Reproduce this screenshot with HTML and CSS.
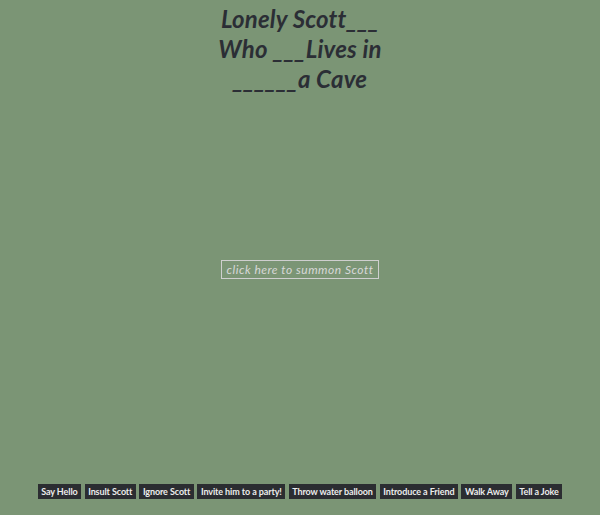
FILE: index.html
```html
<!DOCTYPE html>
<html>
<head>
<meta charset="utf-8">
<link rel="stylesheet" href="styles.css">
</head>
<body>
<div class="page">
  <h1 class="title">Lonely Scott___ Who ___Lives in ______a Cave</h1>
  <div class="stage">
    <button class="summon">click here to summon Scott</button>
  </div>
  <div class="actions">
    <button class="act">Say Hello</button>
    <button class="act">Insult Scott</button>
    <button class="act">Ignore Scott</button>
    <button class="act">Invite him to a party!</button>
    <button class="act">Throw water balloon</button>
    <button class="act">Introduce a Friend</button>
    <button class="act">Walk Away</button>
    <button class="act">Tell a Joke</button>
  </div>
</div>
</body>
</html>
```
FILE: styles.css
```css
html, body {
  margin: 0;
  padding: 0;
  background: #7b9575;
}
.page {
  width: 600px;
  height: 515px;
  display: flex;
  flex-direction: column;
  align-items: center;
  font-family: "Lato", "Open Sans", sans-serif;
}
.title {
  margin: 4px 0 0;
  width: 175px;
  text-align: center;
  font-size: 24px;
  line-height: 30px;
  font-style: italic;
  font-weight: 700;
  letter-spacing: 0.2px;
  color: #2b2e35;
}
.stage {
  flex: 1;
  display: flex;
  align-items: flex-start;
  justify-content: center;
  padding-top: 166px;
}
.summon {
  font-family: inherit;
  font-style: italic;
  font-size: 12px;
  letter-spacing: 0.5px;
  color: #d8d8d8;
  background: transparent;
  border: 1.5px solid #cfcfcf;
  padding: 1px 5px;
  height: 19px;
  line-height: 14px;
}
.actions {
  display: flex;
  gap: 3.5px;
  margin-bottom: 16px;
}
.act {
  font-family: inherit;
  font-weight: 700;
  font-size: 9px;
  letter-spacing: -0.1px;
  color: #ececec;
  background: #2b2d31;
  border: none;
  height: 15px;
  padding: 0 3.5px;
  line-height: 15px;
}
```
